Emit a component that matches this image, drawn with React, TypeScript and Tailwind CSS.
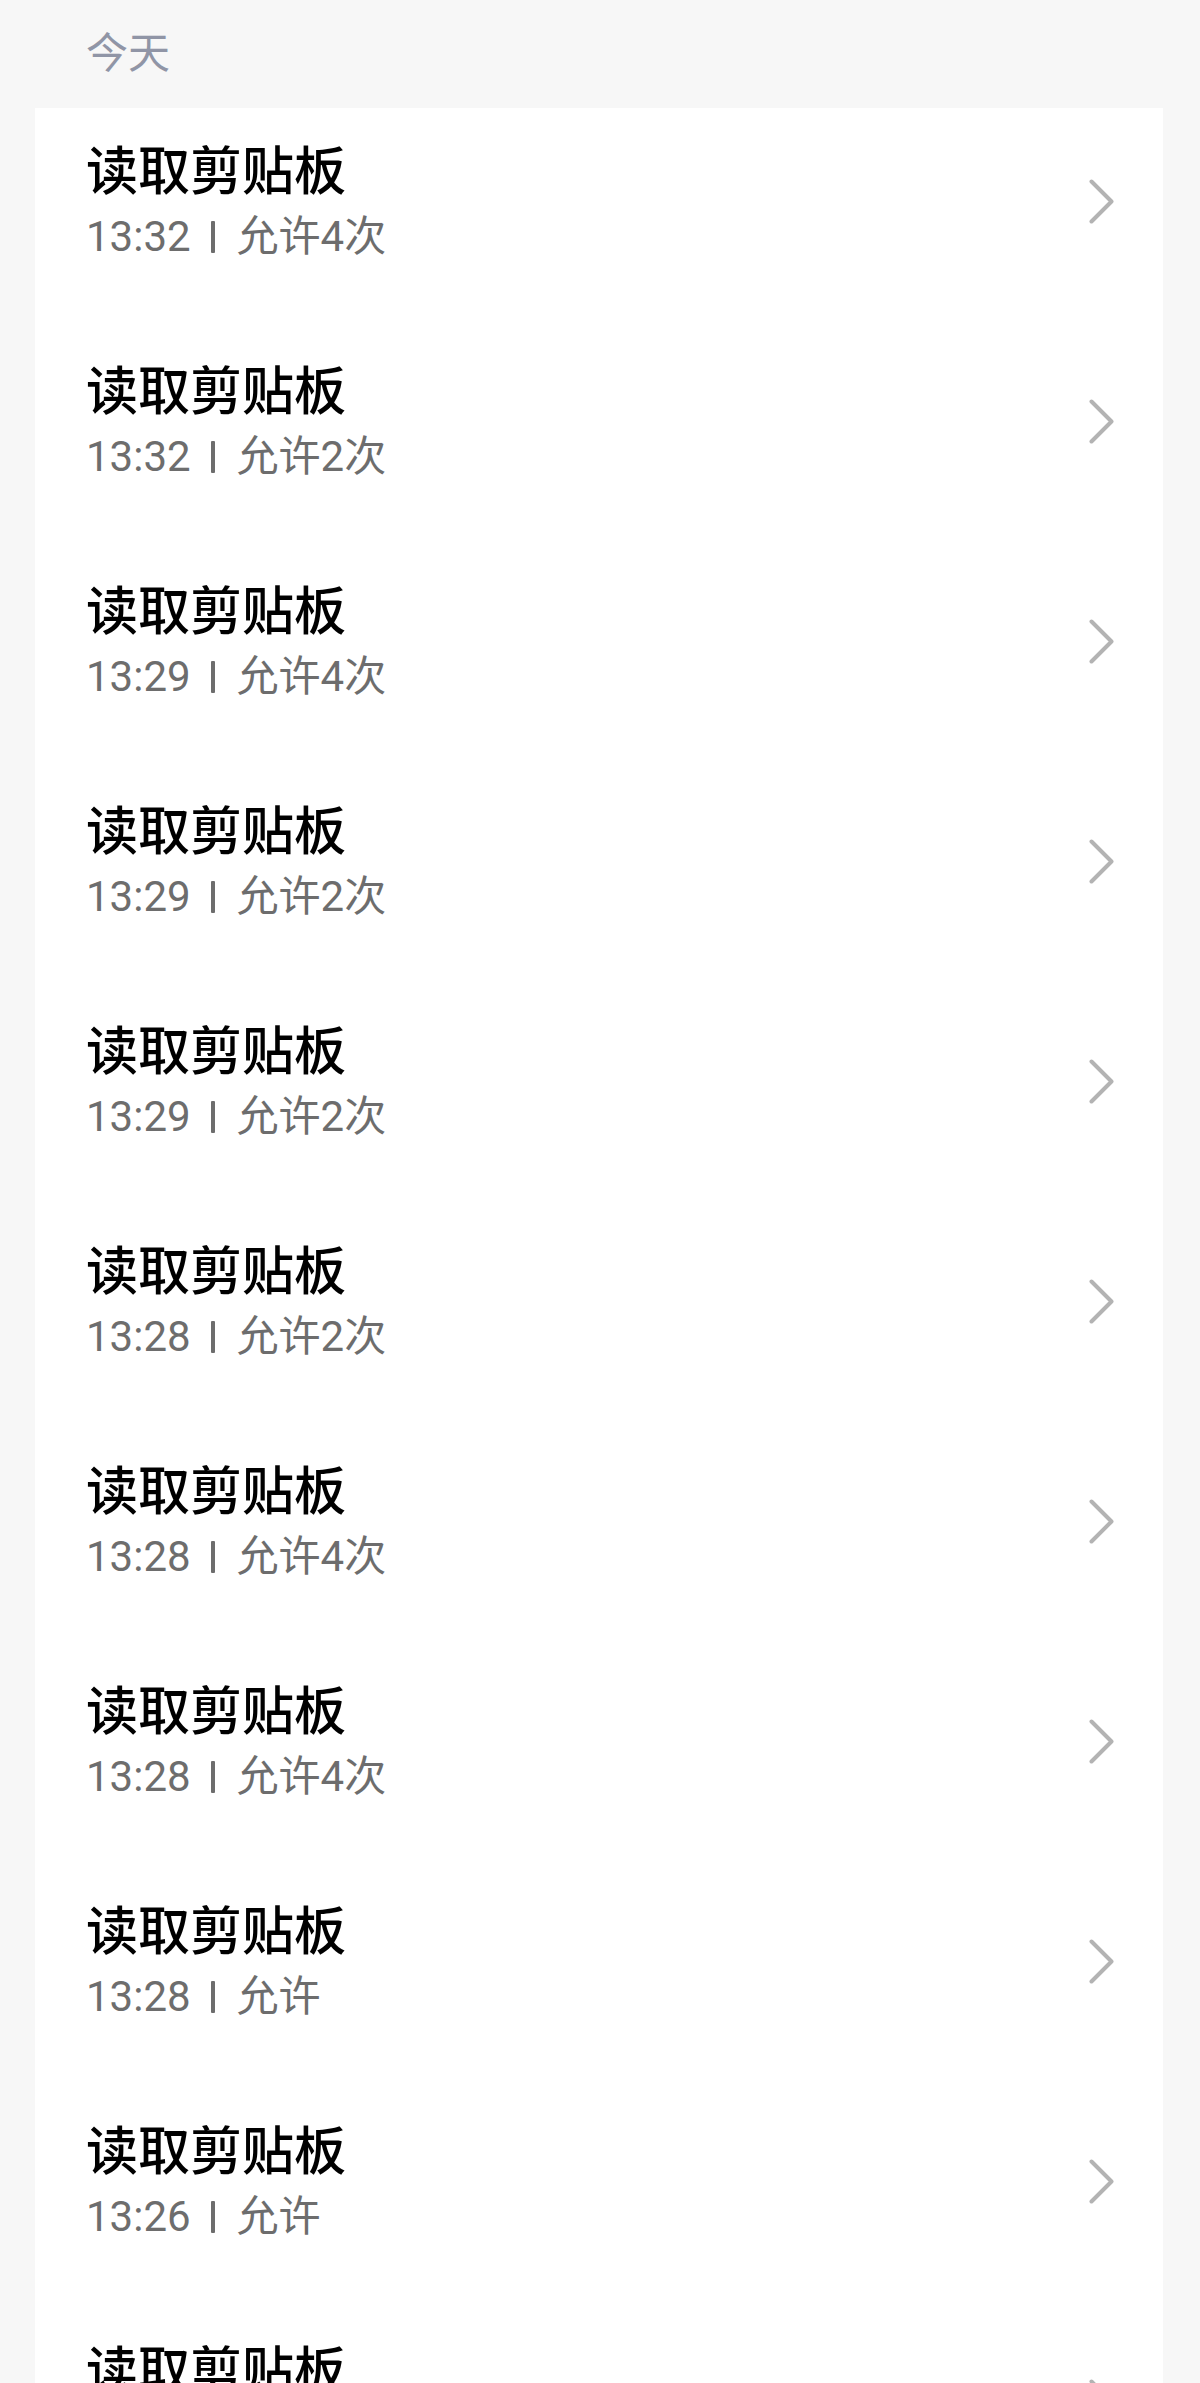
import React from 'react';

const records = [
    { time: '13:32', result: '允许4次' },
    { time: '13:32', result: '允许2次' },
    { time: '13:29', result: '允许4次' },
    { time: '13:29', result: '允许2次' },
    { time: '13:29', result: '允许2次' },
    { time: '13:28', result: '允许2次' },
    { time: '13:28', result: '允许4次' },
    { time: '13:28', result: '允许4次' },
    { time: '13:28', result: '允许' },
    { time: '13:26', result: '允许' },
    { time: '13:26', result: '允许' },
];

const font = { fontFamily: 'Roboto, "Noto Sans CJK SC", sans-serif' };

export default function App() {
    return (
        <div className="w-[1200px] h-[2383px] overflow-hidden bg-[#f7f7f7]" style={font}>
            <div className="h-[108px] pl-[86px] pt-[31px]">
                <span className="text-[42px] leading-[46px] text-[#9095a6]">今天</span>
            </div>

            <div className="ml-[35px] w-[1128px] bg-white pt-[33px] pl-[51px] pr-[49px] flex flex-col gap-[96px]">
                {records.map((r, i) => (
                    <RecordRow key={i} time={r.time} result={r.result} />
                ))}
            </div>
        </div>
    );
}

function RecordRow({ time, result }: { time: string, result: string }) {
    return (
        <div className="h-[124px] flex items-center justify-between cursor-pointer">
            <div className="flex flex-col">
                <span className="text-[52px] leading-[62px] font-medium text-black">读取剪贴板</span>
                <div className="flex items-center h-[56px] mt-[5px] text-[42px] leading-[56px] text-[#6d6d6d]">
                    <span>{time}</span>
                    <span className="inline-block w-[4px] h-[32px] rounded-[1px] bg-[#6d6d6d] ml-[20px] mr-[22px]" />
                    <span>{result}</span>
                </div>
            </div>
            <svg width="25" height="45" viewBox="0 0 25 45" className="shrink-0 -mt-[3px]">
                <polyline points="2.5,2.5 22.5,22.5 2.5,42.5" fill="none" stroke="#b3b3b3" strokeWidth="4" strokeLinecap="round" strokeLinejoin="round" />
            </svg>
        </div>
    );
}
